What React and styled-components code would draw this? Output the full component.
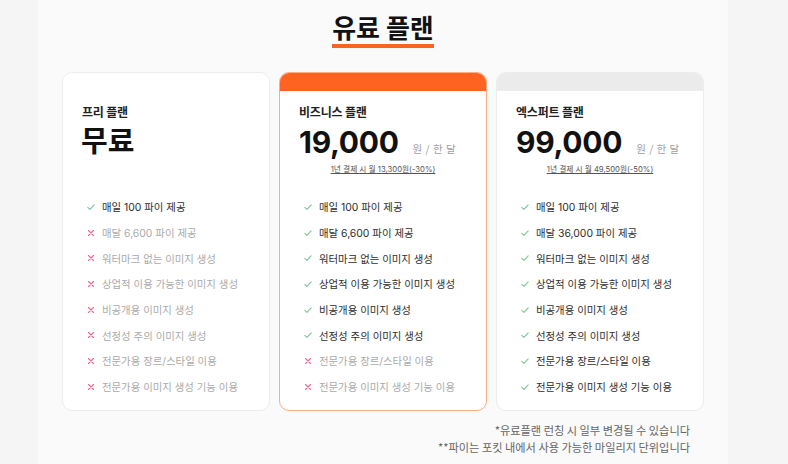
import React from "react";
import styled, { createGlobalStyle } from "styled-components";

const GlobalStyle = createGlobalStyle`
  html, body {
    margin: 0;
    padding: 0;
    background: #f5f5f5;
  }
  body {
    font-family: "Inter", "Noto Sans CJK KR", sans-serif;
    color: #222;
  }
`;

const Panel = styled.div`
  margin-left: 38px;
  width: 690px;
  min-height: 464px;
  background: #fafafa;
  padding-top: 11px;
  box-sizing: border-box;
  display: flex;
  flex-direction: column;
  align-items: center;
`;

const Title = styled.h1`
  margin: 0;
  display: inline-block;
  font-family: "Noto Sans CJK KR", sans-serif;
  font-size: 26px;
  font-weight: 700;
  line-height: 31px;
  color: #111;
  padding-bottom: 2px;
  border-bottom: 4px solid #ff6322;
`;

const Cards = styled.div`
  margin-top: 24px;
  display: grid;
  grid-template-columns: repeat(3, 208px);
  gap: 9px;
`;

const Card = styled.div`
  background: #fff;
  border: 1px solid ${(p) => (p.$variant === "business" ? "#ffac80" : "#ececec")};
  border-radius: 10px;
  overflow: hidden;
  display: flex;
  flex-direction: column;
`;

const CardHeader = styled.div`
  height: 18px;
  background: ${(p) =>
    p.$variant === "business" ? "#ff6322" : p.$variant === "expert" ? "#ebebeb" : "#fff"};
`;

const CardBody = styled.div`
  padding: 13px 19px 10px;
  display: flex;
  flex-direction: column;
`;

const PlanName = styled.div`
  font-family: "Noto Sans CJK KR", sans-serif;
  font-size: 12px;
  font-weight: 700;
  line-height: 16px;
  color: #222;
  letter-spacing: -0.2px;
`;

const PriceRow = styled.div`
  margin-top: 4px;
  height: 36px;
  display: flex;
  align-items: baseline;
  gap: 14px;
  white-space: nowrap;
`;

const Price = styled.span`
  font-size: ${(p) => (p.$korean ? "29px" : "30px")};
  font-weight: 700;
  line-height: 36px;
  color: #111;
  letter-spacing: ${(p) => (p.$korean ? "0" : "-0.3px")};
  margin-left: ${(p) => (p.$korean ? "-1px" : "0")};
`;

const Unit = styled.span`
  flex: none;
  font-family: "Noto Sans CJK KR", sans-serif;
  font-size: 10.5px;
  color: #a0a0a0;
  word-spacing: 1px;
`;

const Discount = styled.div`
  margin-top: 4px;
  height: 12px;
  font-size: 7.7px;
  line-height: 12px;
  color: #555;
  text-align: center;
  text-decoration: underline;
  text-underline-offset: 1px;
  white-space: nowrap;
`;

const FeatureList = styled.ul`
  list-style: none;
  margin: 18px 0 0;
  padding: 0 0 0 5px;
`;

const Feature = styled.li`
  height: 25.7px;
  display: flex;
  align-items: center;
  gap: 7px;
  font-size: 10.4px;
  white-space: nowrap;
  color: ${(p) => (p.$on ? "#2e2e2e" : "#aaa")};
`;

const IconBox = styled.span`
  width: 8px;
  height: 8px;
  display: inline-flex;
  flex: none;
`;

const Footer = styled.div`
  align-self: flex-end;
  margin: 11px 38px 0 0;
  text-align: right;
  font-family: "Noto Sans CJK KR", sans-serif;
  font-size: 11.2px;
  line-height: 17px;
  color: #666;
`;

const CheckIcon = () => (
  <IconBox>
    <svg width="8" height="8" viewBox="0 0 8 8" fill="none">
      <polyline points="0.8,4.3 2.9,6.3 7.2,1.8" stroke="#7cc79a" strokeWidth="1.1" strokeLinecap="round" strokeLinejoin="round" />
    </svg>
  </IconBox>
);

const XIcon = () => (
  <IconBox>
    <svg width="8" height="8" viewBox="0 0 8 8" fill="none">
      <path d="M1.5 1.5 L6.5 6.5 M6.5 1.5 L1.5 6.5" stroke="#f2678b" strokeWidth="1.1" strokeLinecap="round" />
    </svg>
  </IconBox>
);

const FEATURES = [
  "매일 100 파이 제공",
  null,
  "워터마크 없는 이미지 생성",
  "상업적 이용 가능한 이미지 생성",
  "비공개용 이미지 생성",
  "선정성 주의 이미지 생성",
  "전문가용 장르/스타일 이용",
  "전문가용 이미지 생성 기능 이용",
];

const PLANS = [
  {
    variant: "free",
    name: "프리 플랜",
    price: "무료",
    korean: true,
    mileage: "매달 6,600 파이 제공",
    on: 1,
  },
  {
    variant: "business",
    name: "비즈니스 플랜",
    price: "19,000",
    discount: "1년 결제 시 월 13,300원(-30%)",
    mileage: "매달 6,600 파이 제공",
    on: 6,
  },
  {
    variant: "expert",
    name: "엑스퍼트 플랜",
    price: "99,000",
    discount: "1년 결제 시 월 49,500원(-50%)",
    mileage: "매달 36,000 파이 제공",
    on: 8,
  },
];

export default function App() {
  return (
    <>
      <GlobalStyle />
      <Panel>
        <Title>유료 플랜</Title>
        <Cards>
          {PLANS.map((plan) => (
            <Card key={plan.variant} $variant={plan.variant}>
              <CardHeader $variant={plan.variant} />
              <CardBody>
                <PlanName>{plan.name}</PlanName>
                <PriceRow>
                  <Price $korean={plan.korean}>{plan.price}</Price>
                  {!plan.korean && <Unit>원 / 한 달</Unit>}
                </PriceRow>
                <Discount>{plan.discount || ""}</Discount>
                <FeatureList>
                  {FEATURES.map((f, i) => {
                    const on = i < plan.on;
                    return (
                      <Feature key={i} $on={on}>
                        {on ? <CheckIcon /> : <XIcon />}
                        <span>{f || plan.mileage}</span>
                      </Feature>
                    );
                  })}
                </FeatureList>
              </CardBody>
            </Card>
          ))}
        </Cards>
        <Footer>
          *유료플랜 런칭 시 일부 변경될 수 있습니다
          <br />
          **파이는 포킷 내에서 사용 가능한 마일리지 단위입니다
        </Footer>
      </Panel>
    </>
  );
}
